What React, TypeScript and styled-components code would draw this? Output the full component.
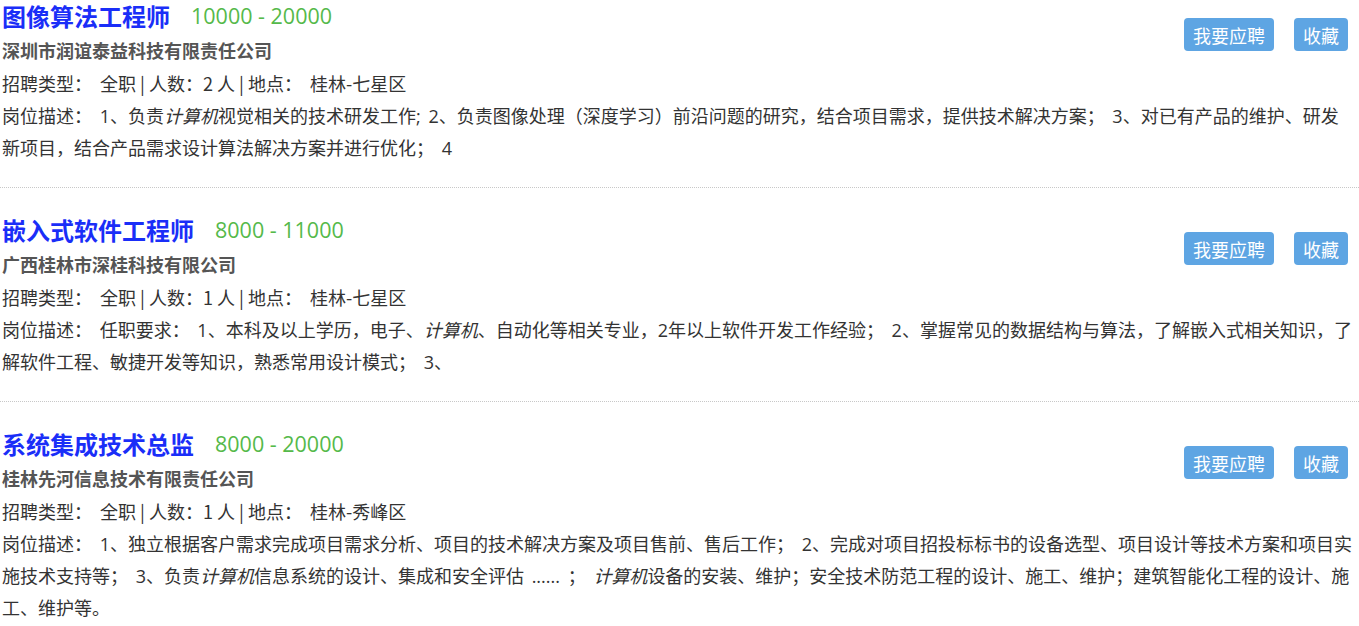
import styled, { createGlobalStyle } from "styled-components";

interface Job {
  title: string;
  salary: string;
  company: string;
  count: number;
  place: string;
  desc: (string | { em: string })[];
}

const jobs: Job[] = [
  {
    title: "图像算法工程师",
    salary: "10000 - 20000",
    company: "深圳市润谊泰益科技有限责任公司",
    count: 2,
    place: "桂林-七星区",
    desc: [
      "1、负责",
      { em: "计算机" },
      "视觉相关的技术研发工作; 2、负责图像处理（深度学习）前沿问题的研究，结合项目需求，提供技术解决方案； 3、对已有产品的维护、研发新项目，结合产品需求设计算法解决方案并进行优化； 4",
    ],
  },
  {
    title: "嵌入式软件工程师",
    salary: "8000 - 11000",
    company: "广西桂林市深桂科技有限公司",
    count: 1,
    place: "桂林-七星区",
    desc: [
      "任职要求： 1、本科及以上学历，电子、",
      { em: "计算机" },
      "、自动化等相关专业，2年以上软件开发工作经验； 2、掌握常见的数据结构与算法，了解嵌入式相关知识，了解软件工程、敏捷开发等知识，熟悉常用设计模式； 3、",
    ],
  },
  {
    title: "系统集成技术总监",
    salary: "8000 - 20000",
    company: "桂林先河信息技术有限责任公司",
    count: 1,
    place: "桂林-秀峰区",
    desc: [
      "1、独立根据客户需求完成项目需求分析、项目的技术解决方案及项目售前、售后工作； 2、完成对项目招投标标书的设备选型、项目设计等技术方案和项目实施技术支持等； 3、负责",
      { em: "计算机" },
      "信息系统的设计、集成和安全评估 ...... ； ",
      { em: "计算机" },
      "设备的安装、维护；安全技术防范工程的设计、施工、维护；建筑智能化工程的设计、施工、维护等。",
    ],
  },
];

const GlobalStyle = createGlobalStyle`
  body {
    margin: 0;
    background: #ffffff;
    font-family: "Noto Sans CJK SC", "Noto Sans", sans-serif;
    color: #333;
  }
`;

const List = styled.div`
  width: 1359px;
`;

const Item = styled.div`
  display: grid;
  grid-template-columns: 1fr auto;
  padding: 26px 7px 23px 2px;
  border-bottom: 1px dotted #c8c8c8;

  &:first-child {
    padding-top: 0;
  }
`;

const Head = styled.div`
  display: flex;
  align-items: center;
  height: 30px;
`;

const Title = styled.a`
  font-size: 24px;
  font-weight: bold;
  color: #1a2ef8;
  text-decoration: none;
`;

const Salary = styled.span`
  margin-left: 21px;
  font-family: "Open Sans", sans-serif;
  font-size: 21.5px;
  color: #55b94a;
`;

const Company = styled.div`
  margin-top: 4px;
  font-size: 18px;
  font-weight: bold;
  line-height: 33px;
  color: #555;
`;

const Info = styled.div`
  font-size: 18px;
  line-height: 33px;
  color: #333;
`;

const Actions = styled.div`
  grid-column: 2;
  grid-row: 1 / span 3;
  display: flex;
  gap: 20px;
  margin: 18px 4px 0 0;
  align-self: start;
`;

const Button = styled.button`
  height: 33px;
  padding: 0 9px;
  border: none;
  border-radius: 4px;
  background-color: #5ea5e3;
  color: #fff;
  font-family: "Noto Sans CJK SC", sans-serif;
  font-size: 18px;
  cursor: pointer;
`;

const Desc = styled.div`
  grid-column: 1 / -1;
  font-family: "Open Sans", "Noto Sans CJK SC", sans-serif;
  font-size: 18px;
  line-height: 32px;
  word-spacing: 3px;
  color: #333;

  em {
    font-style: italic;
  }
`;

const Left = styled.div`
  grid-column: 1;
`;

const App = () => {
  return (
    <List>
      <GlobalStyle />
      {jobs.map((job) => (
        <Item key={job.title}>
          <Left>
            <Head>
              <Title href="#">{job.title}</Title>
              <Salary>{job.salary}</Salary>
            </Head>
            <Company>{job.company}</Company>
            <Info>
              招聘类型：&nbsp; 全职 | 人数：{job.count} 人 | 地点：&nbsp; {job.place}
            </Info>
          </Left>
          <Actions>
            <Button>我要应聘</Button>
            <Button>收藏</Button>
          </Actions>
          <Desc>
            岗位描述：&nbsp;
            {job.desc.map((part, i) =>
              typeof part === "string" ? part : <em key={i}>{part.em}</em>
            )}
          </Desc>
        </Item>
      ))}
    </List>
  );
};

export default App;
